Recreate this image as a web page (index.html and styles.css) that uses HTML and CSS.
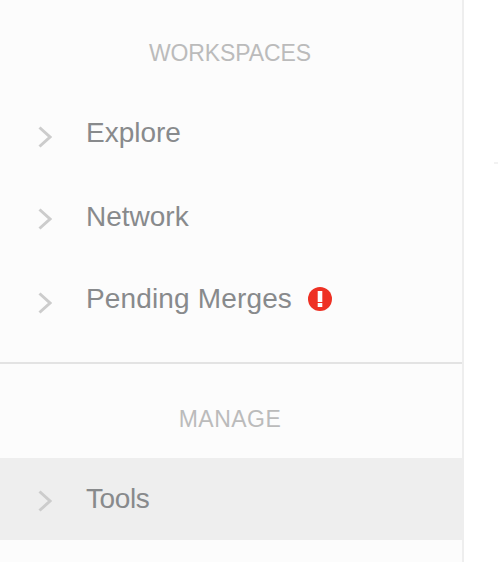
FILE: index.html
```html
<!DOCTYPE html>
<html lang="en">

<head>
  <meta charset="UTF-8">
  <meta name="viewport" content="width=device-width, initial-scale=1.0">
  <title>Workspaces</title>
  <link rel="stylesheet" href="styles.css">
</head>

<body>
  <nav class="sidebar">
    <section class="nav-group nav-group-first">
      <h2 class="nav-title">WORKSPACES</h2>
      <ul class="nav-list">
        <li class="nav-item nav-item-tall">
          <svg class="chevron" viewBox="0 0 14 22"><path d="M1.5 1.5L12 11 1.5 20.5"/></svg>
          <span>Explore</span>
        </li>
        <li class="nav-item">
          <svg class="chevron chevron-high" viewBox="0 0 14 22"><path d="M1.5 1.5L12 11 1.5 20.5"/></svg>
          <span>Network</span>
        </li>
        <li class="nav-item">
          <svg class="chevron" viewBox="0 0 14 22"><path d="M1.5 1.5L12 11 1.5 20.5"/></svg>
          <span class="wide-label">Pending Merges</span>
          <svg class="alert" viewBox="0 0 24 24">
            <circle cx="12" cy="12" r="12"/>
            <rect class="alert-mark" x="9.7" y="4" width="4.6" height="11"/>
            <rect class="alert-mark" x="9.7" y="16" width="4.6" height="4"/>
          </svg>
        </li>
      </ul>
    </section>
    <section class="nav-group">
      <h2 class="nav-title nav-title-short">MANAGE</h2>
      <ul class="nav-list">
        <li class="nav-item active">
          <svg class="chevron chevron-high" viewBox="0 0 14 22"><path d="M1.5 1.5L12 11 1.5 20.5"/></svg>
          <span class="narrow-label">Tools</span>
        </li>
      </ul>
    </section>
  </nav>
  <main class="content">
    <div class="speck"></div>
  </main>
</body>

</html>
```

FILE: styles.css
```css
html, body {
  height: 100%;
}

body {
  margin: 0;
  display: flex;
  overflow: hidden;
  background-color: #fff;
  font-family: 'Liberation Sans', Arial, sans-serif;
}

.sidebar {
  width: 462px;
  flex-shrink: 0;
  background-color: #fcfcfc;
  border-right: 2px solid #eee;
}

.nav-group {
  padding-top: 41px;
}

.nav-group-first {
  padding-top: 39px;
  padding-bottom: 22px;
  border-bottom: 2px solid #e3e3e3;
}

.nav-title {
  margin: 0;
  height: 28px;
  padding-right: 2px;
  line-height: 28px;
  font-size: 23px;
  font-weight: normal;
  letter-spacing: -0.1px;
  text-align: center;
  color: #bbb;
}

.nav-title-short {
  letter-spacing: 0.5px;
}

.nav-group-first .nav-title {
  height: 53px;
}

.nav-group .nav-list {
  margin-top: 25px;
}

.nav-group-first .nav-list {
  margin-top: 0;
}

.nav-list {
  margin: 0;
  padding: 0;
  list-style: none;
}

.nav-item {
  display: flex;
  align-items: center;
  height: 82px;
  padding-left: 38px;
  font-size: 28px;
  color: #888a8c;
}

.nav-item-tall {
  margin-bottom: 2px;
}

.wide-label {
  letter-spacing: 0.15px;
}

.narrow-label {
  letter-spacing: -0.4px;
}

.active {
  background-color: #eee;
}

.chevron {
  width: 14px;
  height: 22px;
  margin-top: 8px;
  margin-right: 34px;
  fill: none;
  stroke: #ccc;
  stroke-width: 3;
}

.chevron-high {
  margin-top: 4px;
}

.alert {
  width: 24px;
  height: 24px;
  margin-left: 16px;
  fill: #ee3124;
}

.alert-mark {
  fill: #fff;
}

.content {
  flex: 1;
  display: flex;
  justify-content: flex-end;
  padding-top: 162px;
}

.speck {
  width: 4px;
  height: 2px;
  background-color: #f2f2f2;
}
```
